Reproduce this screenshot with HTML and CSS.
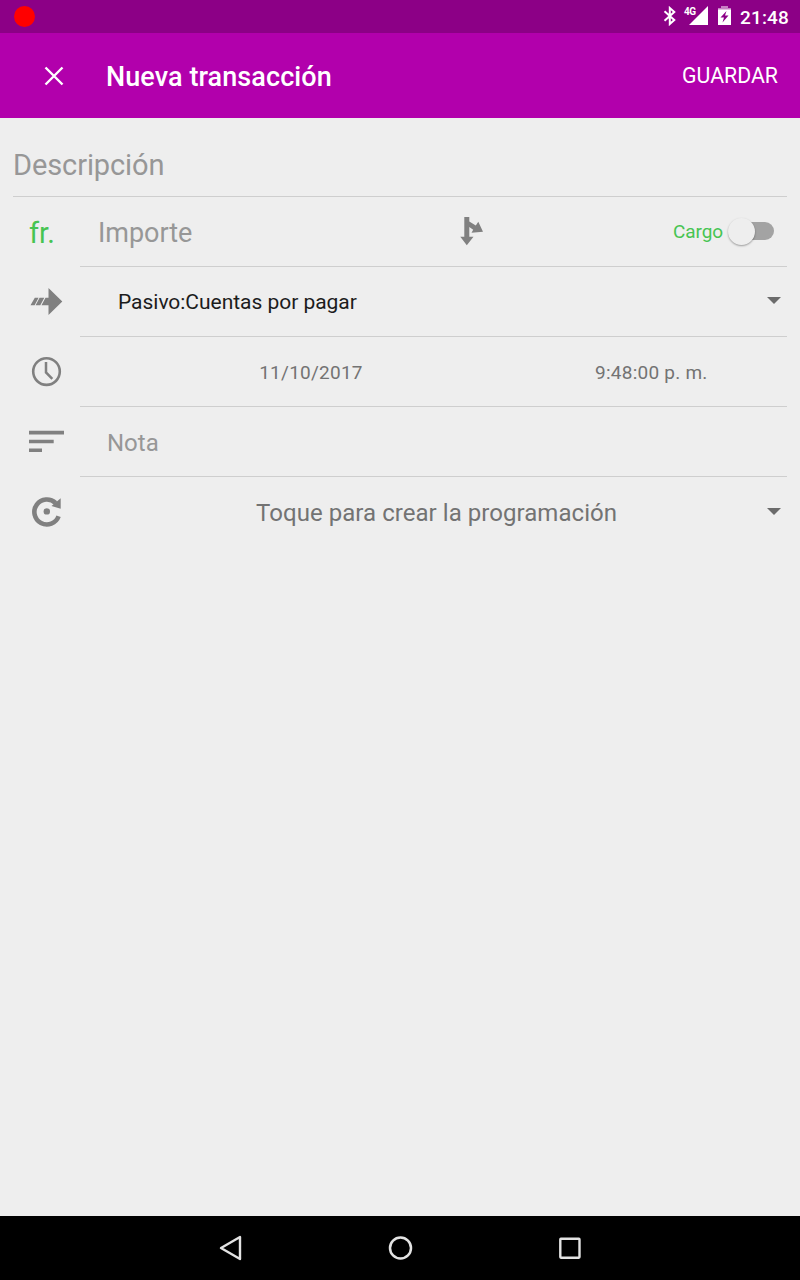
FILE: index.html
```html
<!DOCTYPE html>
<html lang="es">
<head>
<meta charset="utf-8">
<title>Nueva transacción</title>
<link rel="stylesheet" href="styles.css">
</head>
<body>
<div class="screen">
  <header class="status">
    <span class="record"></span>
    <div class="indicators">
      <svg class="bt" width="14" height="20" viewBox="0 0 14 20"><path d="M1.500 5.200 11.300 14 6.800 18V2l4.500 4-9.800 8.800" fill="none" stroke="#fff" stroke-width="2"/></svg>
      <span class="network">4G</span>
      <svg class="signal" width="19" height="19" viewBox="0 0 19 19"><path d="M0 19 19 0v19z" fill="#fff"/></svg>
      <svg class="battery" width="13" height="19" viewBox="0 0 13 19"><path d="M3 0h7v2H3zM0 2h13v2H0z" fill="#c77fc4"/><path fill="#fff" fill-rule="evenodd" d="M0 3.500h13V19H0zM8.500 5 2.500 11.500h3.500L4.500 16.500 10.500 9.500h-3.500z"/></svg>
      <span class="clock">21:48</span>
    </div>
  </header>
  <div class="appbar">
    <svg class="close" width="20" height="20" viewBox="0 0 20 20"><path d="M1.500 1.500l17 17M18.500 1.500l-17 17" stroke="#fff" stroke-width="2.400"/></svg>
    <h1 class="title">Nueva transacción</h1>
    <span class="save">GUARDAR</span>
  </div>
  <main class="form">
    <div class="description">Descripción</div>
    <div class="row">
      <div class="lead currency">fr.</div>
      <div class="field">
        <span class="amount">Importe</span>
        <svg class="split" width="24" height="30" viewBox="0 0 24 30"><path fill="#808080" d="M4.300 1h5v4.500l6.500 4 2.500-3.700L23 15.800l-11.500 1 1.700-3.100-3.900-2.700v9.800h4.200L6.800 29.200 0.300 20.800h4z"/></svg>
        <span class="type">Cargo</span>
        <span class="switch"><span class="thumb"></span></span>
      </div>
    </div>
    <div class="row">
      <div class="lead"><svg width="67" height="69" viewBox="0 0 67 69"><path fill="#808080" d="M35.500 21 49.300 34.500 35.500 48v-9.800h-7l4-7.400h3zM21.800 30.800h3.800l-4 7.400h-4.100zM26.600 30.800h4.700l-4 7.400h-4.700z"/></svg></div>
      <div class="field"><span class="account">Pasivo:Cuentas por pagar</span><span class="caret account-caret"></span></div>
    </div>
    <div class="row">
      <div class="lead"><svg width="67" height="69" viewBox="0 0 67 69"><g fill="none" stroke="#808080"><circle cx="33.500" cy="34.600" r="13.300" stroke-width="2.600"/><path d="M33 25v10.500l6.300 6.300" stroke-width="2.500"/></g></svg></div>
      <div class="field"><span class="date">11/10/2017</span><span class="time">9:48:00 p. m.</span></div>
    </div>
    <div class="row">
      <div class="lead"><svg width="67" height="69" viewBox="0 0 67 69"><path fill="#808080" d="M16 23.800h35v3.600H16zM16 32.700h24.700v3.600H16zM16 41.500h13v3.600H16z"/></svg></div>
      <div class="field"><span class="note">Nota</span></div>
    </div>
    <div class="row last">
      <div class="lead"><svg width="67" height="69" viewBox="0 0 67 69"><path d="M42.600 26A12.500 12.500 0 1 0 45.600 39.300" fill="none" stroke="#808080" stroke-width="4.600"/><circle cx="33.800" cy="34.400" r="3.200" fill="#808080"/><path fill="#808080" d="M47.700 21.300v10.500L38.500 29z"/></svg></div>
      <div class="field"><span class="schedule">Toque para crear la programación</span><span class="caret"></span></div>
    </div>
  </main>
  <nav class="navbar">
    <svg class="back" width="24" height="26" viewBox="0 0 24 26"><path d="M21 2v22L2 13z" fill="none" stroke="#e3e3e3" stroke-width="2.400" stroke-linejoin="round"/></svg>
    <svg class="home" width="26" height="26" viewBox="0 0 26 26"><circle cx="12.500" cy="13" r="10.500" fill="none" stroke="#e3e3e3" stroke-width="2.500"/></svg>
    <svg class="recent" width="24" height="24" viewBox="0 0 24 24"><rect x="2.300" y="2.800" width="19.200" height="18.900" rx=".6" fill="none" stroke="#e3e3e3" stroke-width="2.400"/></svg>
  </nav>
</div>
</body>
</html>
```
FILE: styles.css
```css
* { box-sizing: border-box; }
body { margin: 0; font-family: Roboto, sans-serif; }
svg { display: block; flex: none; }
span { white-space: nowrap; }

.screen { width: 800px; height: 1280px; background: #eee; display: flex; flex-direction: column; }

.status { height: 33px; background: #8c0086; display: flex; justify-content: space-between; padding: 0 11px 0 14px; color: #fff; }
.record { width: 21px; height: 21px; margin-top: 6px; border-radius: 50%; background: #f00; }
.indicators { display: flex; align-items: flex-start; }
.bt { margin: 6px 7px 0 0; }
.network { width: 5px; margin-top: 6px; font-size: 10px; font-weight: 700; line-height: 12px; letter-spacing: -.6px; }
.signal { margin: 6px 10px 0 0; }
.battery { margin: 6px 9px 0 0; }
.clock { font-size: 19px; font-weight: 500; line-height: 36px; letter-spacing: .15px; }

.appbar { height: 85px; background: #b200ac; color: #fff; display: flex; align-items: center; padding: 0 22px 0 44px; }
.title { margin: 2px 0 0 42px; font-size: 27px; font-weight: 500; line-height: 32px; letter-spacing: .08px; }
.save { margin-left: auto; font-size: 21.3px; }

.form { flex: 1; padding: 0 13px; color: #737373; }
.description { height: 79px; border-bottom: 1px solid #cecece; padding-top: 15px; font-size: 29px; line-height: 64px; letter-spacing: -.1px; color: #979797; }
.row { height: 70px; display: flex; }
.lead { width: 67px; flex: none; }
.field { flex: 1; display: flex; align-items: center; border-bottom: 1px solid #cecece; }
.last .field { border-bottom-color: transparent; }

.currency { padding: 2px 0 0 16px; font-size: 29px; line-height: 69px; color: #46c452; }
.amount { width: 362px; padding: 3px 0 0 18px; font-size: 27px; letter-spacing: -.05px; color: #979797; }
.split { margin: -2px 0 0 18px; }
.type { margin-left: auto; font-size: 19px; letter-spacing: -.1px; color: #46c452; }
.switch { position: relative; width: 46px; height: 27px; margin: 1px 13px 0 5px; display: flex; align-items: center; }
.switch::before { content: ""; width: 36px; height: 18px; margin: -2px 0 0 10px; border-radius: 9px; background: #a3a3a3; }
.thumb { position: absolute; left: 0; top: -1px; width: 27px; height: 27px; border-radius: 50%; background: #eee; box-shadow: 0 1px 2px rgba(0, 0, 0, .35); }

.account { padding-left: 38px; font-size: 21px; letter-spacing: -.03px; color: #1c1c1c; }
.caret { width: 14px; height: 7px; margin: 0 6px 0 auto; background: #6b6b6b; clip-path: polygon(0 0, 100% 0, 50% 100%); }
.account-caret { margin-top: -2px; }
.date { width: 462px; padding-top: 2px; font-size: 19px; text-align: center; letter-spacing: .25px; }
.time { padding: 2px 0 0 53px; font-size: 19px; letter-spacing: .25px; }
.note { padding: 3px 0 0 27px; font-size: 24px; color: #979797; }
.schedule { padding: 3px 0 0 176px; font-size: 24px; letter-spacing: .05px; }

.navbar { height: 64px; background: #000; display: flex; align-items: center; padding-left: 219px; }
.home { margin-left: 145px; }
.recent { margin-left: 144px; }
```
